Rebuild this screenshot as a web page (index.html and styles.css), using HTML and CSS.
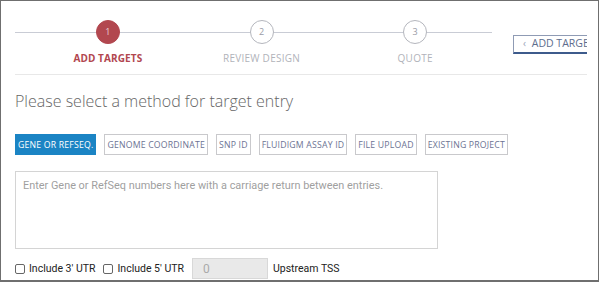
FILE: index.html
```html
<!DOCTYPE html>
<html>
<head>
<meta charset="utf-8">
<link rel="stylesheet" href="styles.css">
</head>
<body>
<div class="frame">
  <div class="top">
    <div class="stepper">
      <div class="step active">
        <div class="circle">1</div>
        <div class="label">ADD TARGETS</div>
      </div>
      <div class="step">
        <div class="circle">2</div>
        <div class="label">REVIEW DESIGN</div>
      </div>
      <div class="step">
        <div class="circle">3</div>
        <div class="label">QUOTE</div>
      </div>
    </div>
    <div class="back-wrap">
      <button class="back"><span class="chev">&lsaquo;</span> ADD TARGETS</button>
    </div>
  </div>

  <h1 class="title">Please select a method for target entry</h1>

  <div class="methods">
    <button class="method on">GENE OR REFSEQ.</button>
    <button class="method">GENOME COORDINATE</button>
    <button class="method">SNP ID</button>
    <button class="method">FLUIDIGM ASSAY ID</button>
    <button class="method">FILE UPLOAD</button>
    <button class="method">EXISTING PROJECT</button>
  </div>

  <textarea class="entry" placeholder="Enter Gene or RefSeq numbers here with a carriage return between entries."></textarea>

  <div class="options">
    <label class="opt"><span class="box"></span>Include 3' UTR</label>
    <label class="opt"><span class="box"></span>Include 5' UTR</label>
    <input class="num" type="text" value="0" disabled>
    <span class="tss">Upstream TSS</span>
  </div>
</div>
</body>
</html>
```

FILE: styles.css
```css
* { box-sizing: border-box; }
html, body { margin: 0; padding: 0; background: #fff; }
.frame {
  width: 599px;
  height: 282px;
  border: 1px solid #6f6f6f;
  border-bottom-width: 2px;
  overflow: hidden;
  padding-left: 14px;
  font-family: "Open Sans", "Liberation Sans", sans-serif;
}
.top {
  display: flex;
  width: 572px;
  height: 74px;
  border-bottom: 1px solid #e8e8e8;
  overflow: hidden;
}
.stepper {
  width: 477px;
  flex: none;
  display: flex;
  padding-left: 16px;
  padding-top: 19px;
  background: linear-gradient(#c9ccd5, #c9ccd5) no-repeat 0 31px / 100% 1px;
}
.step {
  width: 154px;
  display: flex;
  flex-direction: column;
  align-items: center;
}
.circle {
  width: 24px;
  height: 24px;
  border-radius: 50%;
  border: 1px solid #b4b6bd;
  background: #fff;
  color: #9a9ca6;
  font-size: 9px;
  line-height: 22px;
  text-align: center;
}
.step.active .circle {
  background: #b2474f;
  border-color: #b2474f;
  color: #e9d0d3;
}
.label {
  margin-top: 8px;
  font-size: 10px;
  line-height: 12px;
  color: #b1b3ba;
  letter-spacing: 0.25px;
  white-space: nowrap;
}
.step.active .label {
  color: #b2474f;
  font-weight: 700;
  letter-spacing: 0.1px;
}
.back-wrap {
  flex: none;
  padding-left: 21px;
  padding-top: 29px;
}
.back {
  height: 19px;
  width: 100px;
  padding: 0 0 0 9px;
  text-align: left;
  white-space: nowrap;
  background: #fff;
  border: 1px solid #8f9bb4;
  border-bottom: 2px solid #3d5b8c;
  color: #5d6d8d;
  font-family: "Open Sans", "Liberation Sans", sans-serif;
  font-size: 10.5px;
  line-height: 15px;
}
.chev { font-size: 10px; color: #9aa4b8; margin-right: 3px; }
.title {
  margin: 15px 0 0 0;
  font-size: 16px;
  line-height: 22px;
  font-weight: 300;
  color: #666;
}
.methods {
  display: flex;
  gap: 8px;
  margin-top: 22px;
}
.method {
  height: 21px;
  padding: 0 2px;
  background: #fff;
  border: 1px solid #c9c9cc;
  color: #6c7393;
  font-family: "Open Sans", "Liberation Sans", sans-serif;
  font-size: 8.7px;
  letter-spacing: 0.2px;
  white-space: nowrap;
}
.method.on {
  background: #1b84c4;
  border-color: #1b84c4;
  color: #fff;
}
.entry {
  display: block;
  margin-top: 16px;
  width: 423px;
  height: 78px;
  border: 1px solid #d4d4d4;
  padding: 7px 7px;
  resize: none;
  font-family: Roboto, "Liberation Sans", sans-serif;
  font-size: 10.9px;
}
.entry::placeholder { color: #9f9f9f; }
.options {
  display: flex;
  align-items: center;
  margin-top: 9px;
  font-family: Roboto, "Liberation Sans", sans-serif;
  font-size: 10.5px;
  color: #222;
}
.opt { display: flex; align-items: center; margin-right: 8px; }
.box {
  width: 10px;
  height: 10px;
  border: 1px solid #666;
  border-radius: 2px;
  margin-right: 4px;
  background: #fff;
}
.num {
  width: 76px;
  height: 21px;
  border: 1px solid #d8d8d8;
  background: #e9e9e9;
  color: #aaa;
  padding: 0 10px;
  font-family: Roboto, "Liberation Sans", sans-serif;
  font-size: 12px;
  margin-right: 5px;
}
```
